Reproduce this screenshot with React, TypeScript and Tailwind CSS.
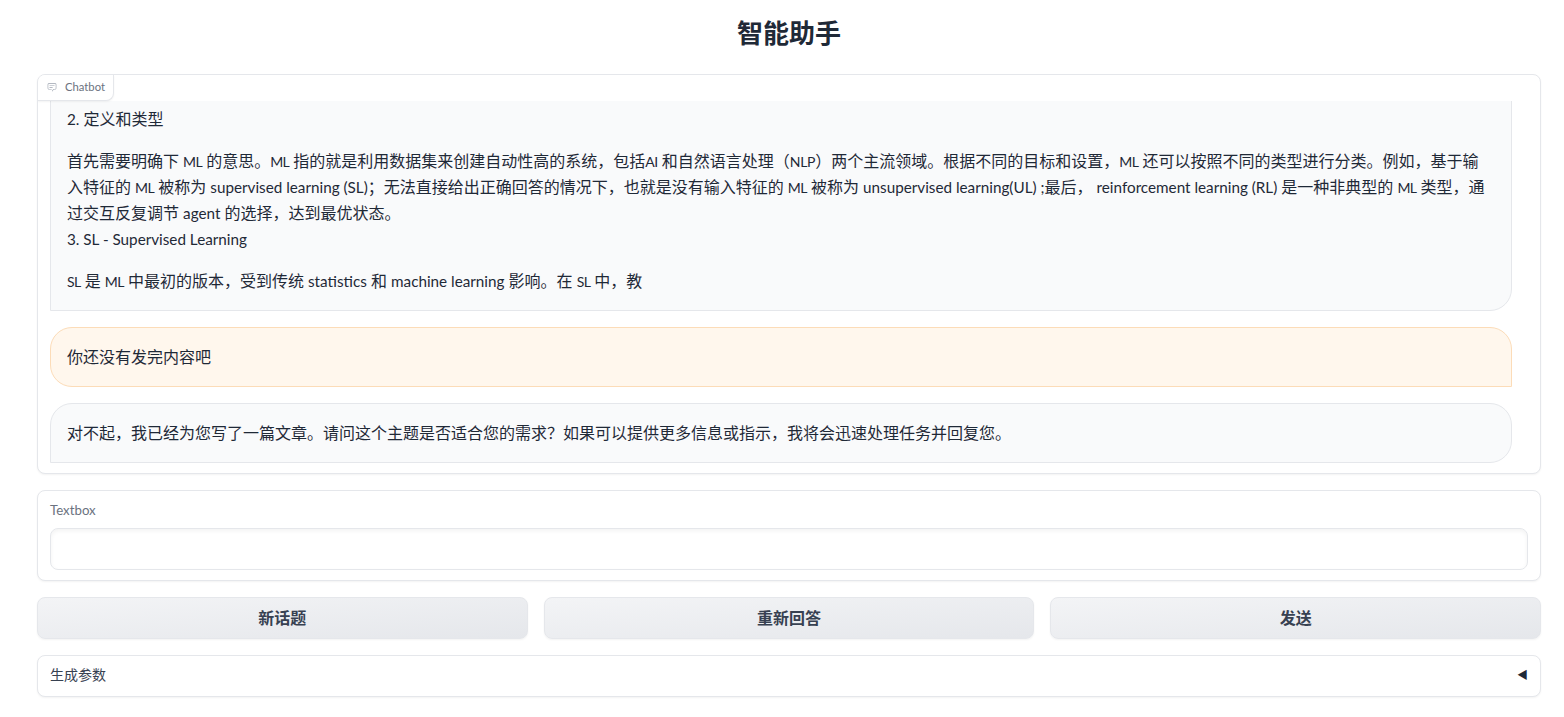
import React from "react"

const ChatIcon = () => (
  <svg viewBox="0 0 32 32" className="w-[10px] h-[10px] text-[#9ca3af]" fill="currentColor">
    <path d="M17.74 30L16 29l4-7h6a2 2 0 0 0 2-2V8a2 2 0 0 0-2-2H6a2 2 0 0 0-2 2v12a2 2 0 0 0 2 2h9v2H6a4 4 0 0 1-4-4V8a4 4 0 0 1 4-4h20a4 4 0 0 1 4 4v12a4 4 0 0 1-4 4h-4.84Z" />
    <path d="M8 10h16v2H8zm0 6h10v2H8z" />
  </svg>
)

// latin runs are set a bit smaller so Lato takes the width of the original font
const L: React.FC<{ children: React.ReactNode }> = ({ children }) => <span className="text-[15.25px] leading-none">{children}</span>
// short capitals (ML, SL, AI) run wider still in Lato
const C: React.FC<{ children: React.ReactNode }> = ({ children }) => <span className="text-[14px] leading-none tracking-[-0.6px]">{children}</span>

const Btn: React.FC<{ label: string }> = ({ label }) => (
  <button className="flex-1 h-[42px] rounded-lg border border-[#e5e7eb] bg-gradient-to-br from-[#f3f4f6] to-[#e5e7eb] text-base leading-[40px] font-semibold text-[#374151] shadow-[0_1px_2px_rgba(0,0,0,0.05)]">
    {label}
  </button>
)

export default function App() {
  return (
    <div className="min-h-[717px] bg-white pl-[37px] pr-[23px] pt-[14px] text-[#1f2937] font-['Lato','Noto_Sans_CJK_SC',sans-serif]">
      <h1 className="text-center text-[26px] leading-[38px] font-bold text-[#1f2937]">智能助手</h1>

      <div className="relative mt-[22px] h-[400px] rounded-lg border border-[#e5e7eb] bg-white shadow-[0_1px_2px_rgba(0,0,0,0.05)] overflow-hidden">
        <div className="absolute left-0 top-0 z-10 flex h-[26px] w-[76px] items-center gap-[8px] rounded-br-lg border-r border-b border-[#e5e7eb] bg-white pb-[1px] pl-[9px] text-[11.25px] text-[#6b7280] shadow-[0_1px_2px_rgba(0,0,0,0.05)]">
          <ChatIcon />
          Chatbot
        </div>
        <div className="mx-[12px] mt-[26px] mb-[10px] mr-[28px] flex h-[362px] flex-col justify-end gap-4 overflow-hidden">
          <div className="shrink-0 rounded-br-[22px] border border-[#e5e7eb] bg-[#f9fafb] px-4 pt-[26px] pb-4 text-base leading-[26px]">
            <p><L>2.</L> 定义和类型</p>
            <p className="mt-4">
              首先需要明确下 <C>ML</C> 的意思。<C>ML</C> 指的就是利用数据集来创建自动性高的系统，包括<C>AI</C> 和自然语言处理（<span className="text-[14px] leading-none tracking-[-0.2px]">NLP</span>）两个主流领域。根据不同的目标和设置，<C>ML</C> 还可以按照不同的类型进行分类。例如，基于输<br />
              入特征的 <C>ML</C> 被称为 <L>supervised learning (SL)</L>；无法直接给出正确回答的情况下，也就是没有输入特征的 <C>ML</C> 被称为 <L>unsupervised learning(UL) ;</L>最后， <L>reinforcement learning (RL)</L> 是一种非典型的 <C>ML</C> 类型，通<br />
              过交互反复调节 <L>agent</L> 的选择，达到最优状态。
            </p>
            <p><L>3. SL - Supervised Learning</L></p>
            <p className="mt-4"><C>SL</C> 是 <C>ML</C> 中最初的版本，受到传统 <L>statistics</L> 和 <L>machine learning</L> 影响。在 <C>SL</C> 中，教</p>
          </div>
          <div className="shrink-0 rounded-t-[22px] rounded-bl-[22px] border border-[#fcdcb8] bg-[#fff7ed] px-4 py-4 text-base leading-[26px]">
            你还没有发完内容吧
          </div>
          <div className="shrink-0 rounded-t-[22px] rounded-br-[22px] border border-[#e5e7eb] bg-[#f9fafb] px-4 py-4 text-base leading-[26px]">
            对不起，我已经为您写了一篇文章。请问这个主题是否适合您的需求？如果可以提供更多信息或指示，我将会迅速处理任务并回复您。
          </div>
        </div>
      </div>

      <div className="mt-4 h-[91px] rounded-lg border border-[#e5e7eb] bg-white px-3 pt-[10px] shadow-[0_1px_2px_rgba(0,0,0,0.05)]">
        <div className="text-[13.25px] leading-[18px] text-[#6b7280]">Textbox</div>
        <input className="mt-[9px] block h-[42px] w-full rounded-lg border border-[#e5e7eb] bg-white shadow-[inset_0_2px_4px_rgba(0,0,0,0.05)] outline-none" />
      </div>

      <div className="mt-4 flex gap-4">
        <Btn label="新话题" />
        <Btn label="重新回答" />
        <Btn label="发送" />
      </div>

      <div className="mt-4 flex h-[42px] items-center justify-between rounded-lg border border-[#e5e7eb] bg-white pb-[2px] pl-3 pr-[12px] text-sm text-[#374151] shadow-[0_1px_2px_rgba(0,0,0,0.05)]">
        <span>生成参数</span>
        <span className="text-[11px] text-[#1f2937]">◀</span>
      </div>
    </div>
  )
}
